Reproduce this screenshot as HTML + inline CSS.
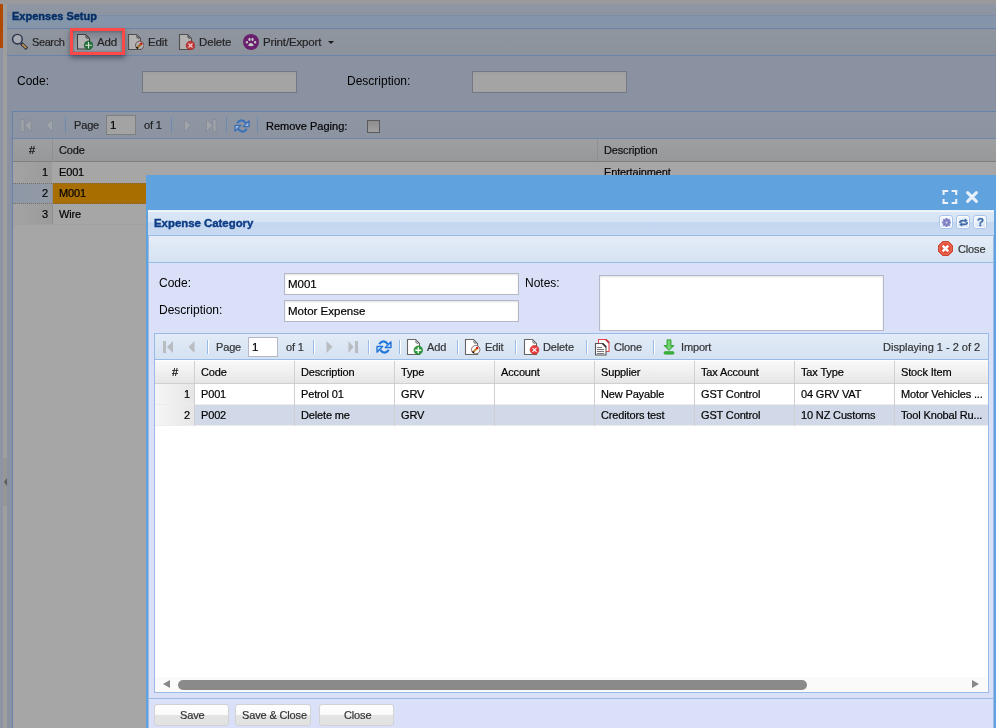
<!DOCTYPE html>
<html><head><meta charset="utf-8">
<style>
*{box-sizing:border-box;margin:0;padding:0}
html,body{width:996px;height:728px;overflow:hidden;background:#9a9a9a;font-family:"Liberation Sans",sans-serif;font-size:11px;color:#000}
.a{position:absolute}
.t{will-change:transform;-webkit-text-stroke:0.2px currentColor;position:absolute;white-space:nowrap;line-height:13px;letter-spacing:-0.15px}
.l12{will-change:transform;position:absolute;white-space:nowrap;line-height:14px;font-size:12px}
.sepm{position:absolute;width:1px;height:16px;background:#6f89b0}
.sepw{position:absolute;width:1px;height:16px;background:#99bbe8;border-right:1px solid #fff;width:2px}
.btn{border:1px solid #d2d2d2;border-radius:3px;background:linear-gradient(#fefefe 0,#fafafa 50%,#e4e4e4 50%,#e2e2e2 100%)}
.hc{position:absolute;top:0;height:22px;border-right:1px solid #d0d0d0}
</style></head><body>
<!-- ===== masked background app ===== -->
<div class="a" style="left:0;top:4px;width:3px;height:44px;background:#b04a02"></div>
<div class="a" style="left:0;top:48px;width:3px;height:680px;background:#8d95a5"></div>
<div class="a" style="left:3px;top:4px;width:4px;height:724px;background:#9e9e9e"></div>
<div class="a" style="left:3px;top:458px;width:4px;height:48px;background:#969696"></div>
<div class="a" style="left:4px;top:478px;width:0;height:0;border-top:4px solid transparent;border-bottom:4px solid transparent;border-right:3px solid #5d5d5d"></div>

<!-- panel header -->
<div class="a" style="left:7px;top:4px;width:989px;height:25px;background:linear-gradient(#8e97a3 0,#8b94a0 11px,#7b8da8 11px,#7b8da8 12px,#8495a9 12px,#8596aa 100%);border-bottom:1px solid #6b83a8"></div>
<div class="t" style="left:12px;top:10px;font-weight:bold;color:#052f66;font-size:11px;letter-spacing:0;-webkit-text-stroke:0.4px #052f66">Expenses Setup</div>
<!-- toolbar -->
<div class="a" style="left:7px;top:29px;width:989px;height:27px;background:linear-gradient(#90969f,#8c929c);border-bottom:1px solid #6c85ad"></div>

<!-- main toolbar items -->
<svg class="a" style="left:11px;top:33px" width="17" height="17" viewBox="0 0 17 17">
 <circle cx="6.4" cy="6.2" r="4.8" fill="#a7aab1" stroke="#27314c" stroke-width="1.4"/>
 <path d="M10.2,10.2 L16,15.8" stroke="#222a3a" stroke-width="3.4" stroke-linecap="butt"/>
 <path d="M11.2,11.1 L15.3,15.1" stroke="#b58d52" stroke-width="2"/>
</svg>
<div class="t" style="left:32px;top:36px;color:#242424;font-size:11px;letter-spacing:-0.4px">Search</div>
<div class="a" style="z-index:5;left:70px;top:28px;width:55px;height:27px;border:3px solid #ff4848;box-shadow:0 3px 5px rgba(30,32,40,0.5)"></div>
<div class="a" style="left:73px;top:31px;width:49px;height:21px;background:linear-gradient(#7a808a,#8e949d 40%,#9aa0a9);box-shadow:inset 0 0 3px rgba(50,55,65,0.6)"></div>
<svg class="a" style="left:76px;top:33px" width="17" height="17" viewBox="0 0 17 17">
 <path d="M1.5,1.5 H9.5 L13.5,5.5 V16 H1.5 Z" fill="#b3b3b3" stroke="#3d3d3d" stroke-width="1.1" stroke-linejoin="miter"/>
 <path d="M10.2,2.6 A1.5,1.5 0 0 0 12.4,4.8" fill="none" stroke="#3d3d3d" stroke-width="1"/>
 <circle cx="12.5" cy="12.3" r="4.3" fill="#24703a" stroke="#1a5a2a" stroke-width="0.6"/>
 <path d="M12.5,9 V15.6 M9.2,12.3 H15.8" stroke="#d4e4d4" stroke-width="1.1"/>
</svg>
<div class="t" style="left:97px;top:36px;color:#242424;font-size:11.5px">Add</div>
<svg class="a" style="left:127px;top:33px" width="17" height="17" viewBox="0 0 17 17">
 <path d="M1.5,1.5 H9.5 L13.5,5.5 V16.5 H1.5 Z" fill="#b3b3b3" stroke="#505050" stroke-width="1.1" stroke-linejoin="miter"/>
 <path d="M10.2,2.6 A1.5,1.5 0 0 0 12.4,4.8" fill="none" stroke="#3d3d3d" stroke-width="1"/>
 <circle cx="12.7" cy="12.3" r="4.2" fill="#b0aeb0" stroke="#5a3e3e" stroke-width="0.8"/>
 <path d="M10,15 L14.5,10.5" stroke="#9c6a1c" stroke-width="2"/>
 <path d="M13.5,11.5 L15,10" stroke="#d01010" stroke-width="2"/>
 <path d="M9.7,15.3 L10.6,14.4" stroke="#000" stroke-width="2"/>
</svg>
<div class="t" style="left:148px;top:36px;color:#242424;font-size:11.5px">Edit</div>
<svg class="a" style="left:178px;top:33px" width="17" height="17" viewBox="0 0 17 17">
 <path d="M1.5,1.5 H9.5 L13.5,5.5 V16.5 H1.5 Z" fill="#b3b3b3" stroke="#505050" stroke-width="1.1" stroke-linejoin="miter"/>
 <path d="M10.2,2.6 A1.5,1.5 0 0 0 12.4,4.8" fill="none" stroke="#3d3d3d" stroke-width="1"/>
 <circle cx="12.5" cy="12.5" r="4.4" fill="#c03737" stroke="#a02a2a" stroke-width="0.6"/>
 <path d="M10.5,10.5 L14.5,14.5 M14.5,10.5 L10.5,14.5" stroke="#f0d0d0" stroke-width="1.1"/>
</svg>
<div class="t" style="left:199px;top:36px;color:#242424;font-size:11.5px">Delete</div>
<svg class="a" style="left:243px;top:34px" width="16" height="16" viewBox="0 0 16 16">
 <circle cx="8" cy="8" r="8" fill="#6a1f6e"/>
 <g fill="#c6cdc4">
 <path d="M5.3,11.8 Q5.3,9.3 8,8.9 Q10.7,9.3 10.7,11.8 Q8,12.6 5.3,11.8 Z"/>
 <ellipse cx="3.9" cy="8.3" rx="1.1" ry="1.3"/>
 <ellipse cx="12.1" cy="8.3" rx="1.1" ry="1.3"/>
 <ellipse cx="6.5" cy="5.4" rx="1.1" ry="1.6"/>
 <ellipse cx="9.5" cy="5.4" rx="1.1" ry="1.6"/>
 </g>
</svg>
<div class="t" style="left:263px;top:36px;color:#242424;font-size:11.5px">Print/Export</div>
<div class="a" style="left:328px;top:41px;width:0;height:0;border-left:3px solid transparent;border-right:3px solid transparent;border-top:3px solid #1a1a1a"></div>
<!-- form -->
<div class="a" style="left:7px;top:56px;width:989px;height:672px;background:#8a92a2"></div>
<div class="l12" style="left:17px;top:74px;color:#000">Code:</div>
<div class="a" style="left:142px;top:71px;width:155px;height:22px;background:linear-gradient(#9ea0a0,#a4a4a4 4px);border:1px solid #747882"></div>
<div class="l12" style="left:347px;top:74px;color:#000">Description:</div>
<div class="a" style="left:472px;top:71px;width:155px;height:22px;background:linear-gradient(#9ea0a0,#a4a4a4 4px);border:1px solid #747882"></div>

<!-- grid (masked) -->
<div class="a" style="left:12px;top:111px;width:984px;height:617px;background:#a6a6a6;border:1px solid #6883aa;border-right:none;border-bottom:none"></div>
<!-- paging toolbar -->
<div class="a" style="left:13px;top:112px;width:983px;height:27px;background:linear-gradient(#8f96a3,#8c94a1);border-bottom:1px solid #6c85ad"></div>
<div class="t" style="left:74px;top:119px;color:#1f1f1f">Page</div>
<div class="a" style="left:106px;top:115px;width:30px;height:20px;background:#a3a3a3;border:1px solid #7f7f7f"></div>
<div class="t" style="left:110px;top:119px;color:#000;font-size:11.5px">1</div>
<div class="t" style="left:144px;top:119px;color:#1f1f1f">of 1</div>
<div class="sepm" style="left:65px;top:117px"></div>
<div class="sepm" style="left:171px;top:117px"></div>
<div class="sepm" style="left:226px;top:117px"></div>
<div class="sepm" style="left:257px;top:117px"></div>
<div class="t" style="left:266px;top:120px;color:#000;letter-spacing:0">Remove Paging:</div>
<div class="a" style="left:367px;top:120px;width:13px;height:13px;background:linear-gradient(#8d8d8d,#a0a0a0);border:1px solid #5a5a5a"></div>

<svg class="a" style="left:21px;top:119px" width="12" height="13" viewBox="0 0 12 13"><rect x="0" y="0.5" width="3" height="12" fill="#a0a4ab" stroke="#81868e" stroke-width="0.6"/><path d="M10,0.5 V12.5 L4,6.5 Z" fill="#a0a4ab" stroke="#81868e" stroke-width="0.6"/></svg>
<svg class="a" style="left:46px;top:119px" width="8" height="13" viewBox="0 0 8 13"><path d="M6.5,0.5 V12.5 L0.5,6.5 Z" fill="#a0a4ab" stroke="#81868e" stroke-width="0.6"/></svg>
<svg class="a" style="left:184px;top:119px" width="8" height="13" viewBox="0 0 8 13"><path d="M0.5,0.5 V12.5 L6.5,6.5 Z" fill="#a0a4ab" stroke="#81868e" stroke-width="0.6"/></svg>
<svg class="a" style="left:206px;top:119px" width="12" height="13" viewBox="0 0 12 13"><path d="M0.5,0.5 V12.5 L6.5,6.5 Z" fill="#a0a4ab" stroke="#81868e" stroke-width="0.6"/><rect x="7" y="0.5" width="3" height="12" fill="#a0a4ab" stroke="#81868e" stroke-width="0.6"/></svg>
<svg class="a" style="left:234px;top:118px" width="16" height="16" viewBox="0 0 16 16">
 <path d="M3.2,5.2 Q7.5,-0.6 11.8,5.2" stroke="#3a72bc" stroke-width="2.2" fill="none"/>
 <path d="M9.2,8.6 L15,8.6 L15,2.8 Z" fill="#9db8da" stroke="#3a6eb4" stroke-width="1.3" stroke-linejoin="round"/>
 <path d="M12.8,10.8 Q8.5,16.6 4.2,10.8" stroke="#3a72bc" stroke-width="2.2" fill="none"/>
 <path d="M6.8,7.4 L1,7.4 L1,13.2 Z" fill="#9db8da" stroke="#3a6eb4" stroke-width="1.3" stroke-linejoin="round"/>
</svg>
<!-- grid header -->
<div class="a" style="left:13px;top:139px;width:983px;height:23px;background:linear-gradient(#9e9fa0,#97989a);border-bottom:1px solid #808080"></div>
<div class="a" style="left:52px;top:139px;width:1px;height:86px;background:#8f8f8f"></div>
<div class="a" style="left:597px;top:139px;width:1px;height:22px;background:#8f8f8f"></div>
<div class="t" style="left:29px;top:144px;color:#111">#</div>
<div class="t" style="left:59px;top:144px;color:#111">Code</div>
<div class="t" style="left:604px;top:144px;color:#111">Description</div>
<!-- rows -->
<div class="a" style="left:13px;top:162px;width:983px;height:21px;background:#a6a6a6"></div>
<div class="a" style="left:13px;top:162px;width:39px;height:63px;background:linear-gradient(90deg,#a3a3a3,#9b9b9b)"></div>
<div class="a" style="left:13px;top:183px;width:39px;height:21px;background:linear-gradient(90deg,#8e97a6,#939aa6);border-top:1px dotted #7a7060;border-bottom:1px dotted #7a7060"></div>
<div class="a" style="left:53px;top:183px;width:943px;height:21px;background:#a86e00;border-top:1px dotted #7a6a4a;border-bottom:1px dotted #7a6a4a"></div>
<div class="a" style="left:13px;top:204px;width:983px;height:21px;background:transparent;border-bottom:1px solid #a0a0a0"></div>
<div class="t" style="left:42px;top:166px">1</div>
<div class="t" style="left:42px;top:187px">2</div>
<div class="t" style="left:42px;top:208px">3</div>
<div class="t" style="left:59px;top:166px">E001</div>
<div class="t" style="left:59px;top:187px">M001</div>
<div class="t" style="left:59px;top:208px">Wire</div>
<div class="t" style="left:604px;top:166px">Entertainment</div>

<!-- ===== modal window ===== -->
<div class="a" style="left:146px;top:175px;width:850px;height:553px;background:#5fa2dd"></div>
<!-- header tools -->
<svg class="a" style="left:942px;top:190px" width="16" height="14" viewBox="0 0 16 14" fill="#edf3fa">
 <rect x="0.6" y="0" width="5.6" height="2"/><rect x="0.6" y="0" width="2" height="5"/>
 <rect x="9.6" y="0" width="5.6" height="2"/><rect x="13.2" y="0" width="2" height="5"/>
 <rect x="0.6" y="12" width="5.6" height="2"/><rect x="0.6" y="9" width="2" height="5"/>
 <rect x="9.6" y="12" width="5.6" height="2"/><rect x="13.2" y="9" width="2" height="5"/>
</svg>
<svg class="a" style="left:965px;top:190px" width="14" height="14" viewBox="0 0 14 14">
 <path d="M2.6,2.6 L11.4,11.4 M11.4,2.6 L2.6,11.4" stroke="#e9f1fa" stroke-width="3" stroke-linecap="round"/>
</svg>
<!-- inner panel -->
<div class="a" style="left:148px;top:210px;width:846px;height:518px;background:#d9e0f8;border-left:1px solid #99bbe8;border-right:1px solid #99bbe8"></div>
<div class="a" style="left:148px;top:210px;width:846px;height:2px;background:linear-gradient(#e6eef9,#f4f8fd)"></div>
<div class="a" style="left:148px;top:212px;width:846px;height:24px;background:linear-gradient(#dbe7f6 0,#d5e3f4 10px,#c4d7f0 10px,#c8daf1 100%);border-bottom:1px solid #99bbe8"></div>
<div class="t" style="left:154px;top:217px;font-weight:bold;color:#0d3d86;letter-spacing:0;font-size:11.4px;-webkit-text-stroke:0.4px #0d3d86">Expense Category</div>
<!-- panel tools -->
<div class="a" style="left:939px;top:215px;width:14px;height:14px;border:1px solid #a9c4ea;border-radius:3px;background:#fff"></div>
<div class="a" style="left:956px;top:215px;width:14px;height:14px;border:1px solid #a9c4ea;border-radius:3px;background:#fff"></div>
<div class="a" style="left:973px;top:215px;width:14px;height:14px;border:1px solid #a9c4ea;border-radius:3px;background:#fff"></div>
<div class="a" style="left:941px;top:217px;width:10px;height:10px;background:linear-gradient(#eef4fc,#dce8f8)"></div>
<div class="a" style="left:958px;top:217px;width:10px;height:10px;background:linear-gradient(#eef4fc,#dce8f8)"></div>
<div class="a" style="left:975px;top:217px;width:10px;height:10px;background:linear-gradient(#eef4fc,#dce8f8)"></div>
<svg class="a" style="left:941px;top:217px" width="11" height="11" viewBox="0 0 11 11">
 <g fill="#8080c4">
 <circle cx="5.5" cy="5.5" r="3.4"/>
 <rect x="4.6" y="1" width="1.8" height="9"/>
 <rect x="1" y="4.6" width="9" height="1.8"/>
 <rect x="4.6" y="1" width="1.8" height="9" transform="rotate(45 5.5 5.5)"/>
 <rect x="4.6" y="1" width="1.8" height="9" transform="rotate(-45 5.5 5.5)"/>
 </g>
 <circle cx="5.5" cy="5.5" r="1.1" fill="#d8dcf0"/>
</svg>
<svg class="a" style="left:958px;top:217px" width="11" height="11" viewBox="0 0 11 11">
 <path d="M1.8,6 Q1.8,3.6 4.5,3.6 H7.5" stroke="#3f6aa6" stroke-width="1.6" fill="none"/>
 <path d="M6.8,1.2 L9.6,3.6 L6.8,6 Z" fill="#3f6aa6"/>
 <path d="M9.2,5 Q9.2,7.4 6.5,7.4 H3.5" stroke="#3f6aa6" stroke-width="1.6" fill="none"/>
 <path d="M4.2,5 L1.4,7.4 L4.2,9.8 Z" fill="#3f6aa6"/>
</svg>
<div class="t" style="left:977px;top:216px;font-weight:bold;color:#3d6aa6;font-size:11.5px;-webkit-text-stroke:0.3px #3d6aa6;letter-spacing:0;line-height:13px">?</div>
<!-- close toolbar -->
<div class="a" style="left:149px;top:236px;width:844px;height:27px;background:linear-gradient(#e4ecf7,#d6e3f2);border-bottom:1px solid #99bbe8"></div>
<svg class="a" style="left:938px;top:241px" width="15" height="15" viewBox="0 0 16 16">
 <path d="M5,0.5 H11 L15.5,5 V11 L11,15.5 H5 L0.5,11 V5 Z" fill="#e4472f" stroke="#c83a26" stroke-width="1"/>
 <path d="M5.6,2 H10.4 L14,5.6 V10.4 L10.4,14 H5.6 L2,10.4 V5.6 Z" fill="none" stroke="#f08a78" stroke-width="0.9"/>
 <path d="M5,5 L11,11 M11,5 L5,11" stroke="#fff" stroke-width="2.8"/>
</svg>
<div class="t" style="left:958px;top:243px;color:#333">Close</div>
<!-- form -->
<div class="l12" style="left:159px;top:276px;color:#000">Code:</div>
<div class="l12" style="left:159px;top:303px;color:#000">Description:</div>
<div class="a" style="left:284px;top:273px;width:235px;height:22px;background:#fff;border:1px solid #b5b8c8;box-shadow:inset 0 1px 2px rgba(0,0,0,0.12)"></div>
<div class="t" style="left:288px;top:278px;font-size:11.5px;letter-spacing:0">M001</div>
<div class="a" style="left:284px;top:300px;width:235px;height:22px;background:#fff;border:1px solid #b5b8c8;box-shadow:inset 0 1px 2px rgba(0,0,0,0.12)"></div>
<div class="t" style="left:288px;top:305px;font-size:11.5px;letter-spacing:0">Motor Expense</div>
<div class="l12" style="left:525px;top:276px;color:#000">Notes:</div>
<div class="a" style="left:599px;top:275px;width:285px;height:56px;background:#fff;border:1px solid #b5b8c8;box-shadow:inset 0 1px 2px rgba(0,0,0,0.12)"></div>

<!-- window grid -->
<div class="a" style="left:154px;top:333px;width:835px;height:360px;background:#fff;border:1px solid #99bbe8"></div>
<div class="a" style="left:155px;top:334px;width:833px;height:26px;background:linear-gradient(#e2ebf7,#d5e2f2);border-bottom:1px solid #99bbe8"></div>
<svg class="a" style="left:163px;top:341px" width="11" height="12" viewBox="0 0 11 12"><rect x="0" y="0" width="3" height="12" fill="#b9bcc0"/><path d="M10,0 V12 L4,6 Z" fill="#b9bcc0"/></svg>
<svg class="a" style="left:188px;top:341px" width="7" height="12" viewBox="0 0 7 12"><path d="M6.5,0 V12 L0.5,6 Z" fill="#b9bcc0"/></svg>
<div class="sepw" style="left:207px;top:340px;height:14px"></div>
<div class="t" style="left:216px;top:341px;color:#333">Page</div>
<div class="a" style="left:248px;top:337px;width:30px;height:20px;background:#fff;border:1px solid #b5b8c8"></div>
<div class="t" style="left:252px;top:341px;font-size:11.5px">1</div>
<div class="t" style="left:286px;top:341px;color:#333">of 1</div>
<div class="sepw" style="left:313px;top:340px;height:14px"></div>
<svg class="a" style="left:326px;top:341px" width="7" height="12" viewBox="0 0 7 12"><path d="M0.5,0 V12 L6.5,6 Z" fill="#b9bcc0"/></svg>
<svg class="a" style="left:348px;top:341px" width="11" height="12" viewBox="0 0 11 12"><path d="M0.5,0 V12 L5.5,6 Z" fill="#b9bcc0"/><rect x="7" y="0" width="3" height="12" fill="#b9bcc0"/></svg>
<div class="sepw" style="left:368px;top:340px;height:14px"></div>
<svg class="a" style="left:376px;top:339px" width="16" height="16" viewBox="0 0 16 16">
 <path d="M3.2,5.2 Q7.5,-0.6 11.8,5.2" stroke="#1f78dc" stroke-width="2.2" fill="none"/>
 <path d="M9.2,8.6 L15,8.6 L15,2.8 Z" fill="#a8d4ff" stroke="#1f6fd6" stroke-width="1.3" stroke-linejoin="round"/>
 <path d="M12.8,10.8 Q8.5,16.6 4.2,10.8" stroke="#1f78dc" stroke-width="2.2" fill="none"/>
 <path d="M6.8,7.4 L1,7.4 L1,13.2 Z" fill="#a8d4ff" stroke="#1f6fd6" stroke-width="1.3" stroke-linejoin="round"/>
</svg>
<div class="sepw" style="left:399px;top:340px;height:14px"></div>
<svg class="a" style="left:406px;top:338px" width="17" height="17" viewBox="0 0 17 17">
 <path d="M1.5,1.5 H9.5 L13.5,5.5 V16.5 H1.5 Z" fill="#fff" stroke="#666" stroke-width="1.1" stroke-linejoin="miter"/>
 <path d="M10.2,2.6 A1.5,1.5 0 0 0 12.4,4.8" fill="none" stroke="#666" stroke-width="1"/>
 <circle cx="12.3" cy="12.2" r="4.3" fill="#2a9a3a" stroke="#1f7a2c" stroke-width="0.6"/>
 <path d="M12.3,9.2 V15.2 M9.3,12.2 H15.3" stroke="#fff" stroke-width="1.4"/>
</svg>
<div class="t" style="left:427px;top:341px;color:#333">Add</div>
<div class="sepw" style="left:457px;top:340px;height:14px"></div>
<svg class="a" style="left:464px;top:338px" width="17" height="17" viewBox="0 0 17 17">
 <path d="M1.5,1.5 H9.5 L13.5,5.5 V16.5 H1.5 Z" fill="#fff" stroke="#666" stroke-width="1.1" stroke-linejoin="miter"/>
 <path d="M10.2,2.6 A1.5,1.5 0 0 0 12.4,4.8" fill="none" stroke="#666" stroke-width="1"/>
 <circle cx="11.7" cy="11.6" r="4.2" fill="#fff" stroke="#7a4a4a" stroke-width="0.8"/>
 <path d="M9,14.3 L13.5,9.8" stroke="#c08a30" stroke-width="2"/>
 <path d="M12.5,10.8 L14,9.3" stroke="#e01010" stroke-width="2"/>
 <path d="M8.7,14.6 L9.6,13.7" stroke="#000" stroke-width="2"/>
</svg>
<div class="t" style="left:485px;top:341px;color:#333">Edit</div>
<div class="sepw" style="left:515px;top:340px;height:14px"></div>
<svg class="a" style="left:523px;top:338px" width="17" height="17" viewBox="0 0 17 17">
 <path d="M1.5,1.5 H9.5 L13.5,5.5 V16.5 H1.5 Z" fill="#fff" stroke="#666" stroke-width="1.1" stroke-linejoin="miter"/>
 <path d="M10.2,2.6 A1.5,1.5 0 0 0 12.4,4.8" fill="none" stroke="#666" stroke-width="1"/>
 <circle cx="11.5" cy="11.8" r="4.4" fill="#e83a3a" stroke="#c02a2a" stroke-width="0.6"/>
 <path d="M9.5,9.8 L13.5,13.8 M13.5,9.8 L9.5,13.8" stroke="#fff" stroke-width="1.1"/>
</svg>
<div class="t" style="left:543px;top:341px;color:#333">Delete</div>
<div class="sepw" style="left:586px;top:340px;height:14px"></div>
<svg class="a" style="left:594px;top:338px" width="17" height="18" viewBox="0 0 17 18">
 <path d="M4.5,1.5 H12.5 L15,4 V13.5 H4.5 Z" fill="#fff" stroke="#e8484f" stroke-width="1.1"/>
 <path d="M11.5,1.5 L15,5" stroke="#b03040" stroke-width="1.3"/>
 <path d="M1.5,5.5 H9 L12,8.5 V17 H1.5 Z" fill="#fbfbfb" stroke="#555" stroke-width="1.1"/>
 <path d="M8.5,5.5 L12,9" stroke="#333" stroke-width="1.6"/>
 <path d="M3,9.5 H8 M3,11.5 H10 M3,13.5 H10 M3,15.5 H10" stroke="#777" stroke-width="1"/>
</svg>
<div class="t" style="left:614px;top:341px;color:#333">Clone</div>
<div class="sepw" style="left:653px;top:340px;height:14px"></div>
<svg class="a" style="left:663px;top:339px" width="12" height="16" viewBox="0 0 12 16">
 <defs><linearGradient id="gi" x1="0" x2="1" y1="0" y2="0"><stop offset="0" stop-color="#2fa82f"/><stop offset="0.5" stop-color="#7ad67a"/><stop offset="1" stop-color="#2fa82f"/></linearGradient></defs>
 <path d="M4,0.8 H8 V6.5 H11 L6,11.5 L1,6.5 H4 Z" fill="url(#gi)" stroke="#2a9a2a" stroke-width="0.8"/>
 <rect x="1" y="12.6" width="10" height="2.6" rx="1.2" fill="#3cb43c" stroke="#2a9a2a" stroke-width="0.6"/>
</svg>
<div class="t" style="left:681px;top:341px;color:#333">Import</div>
<div class="t" style="left:883px;top:341px;color:#333;letter-spacing:0">Displaying 1 - 2 of 2</div>
<!-- header -->
<div class="a" style="left:155px;top:361px;width:833px;height:23px;background:linear-gradient(#f9f9f9,#e6e6e6);border-bottom:1px solid #d0d0d0"></div>
<div class="t" style="left:172px;top:366px;color:#000">#</div>
<div class="t" style="left:201px;top:366px;color:#000">Code</div>
<div class="t" style="left:301px;top:366px;color:#000">Description</div>
<div class="t" style="left:401px;top:366px;color:#000">Type</div>
<div class="t" style="left:501px;top:366px;color:#000">Account</div>
<div class="t" style="left:601px;top:366px;color:#000">Supplier</div>
<div class="t" style="left:701px;top:366px;color:#000">Tax Account</div>
<div class="t" style="left:801px;top:366px;color:#000">Tax Type</div>
<div class="t" style="left:901px;top:366px;color:#000">Stock Item</div>
<div class="a" style="left:155px;top:384px;width:39px;height:42px;background:linear-gradient(90deg,#f6f6f6,#e6e6e6)"></div>
<div class="a" style="left:195px;top:405px;width:793px;height:20px;background:#d1d9e8"></div>
<div class="a" style="left:155px;top:404px;width:833px;height:1px;background:#ededed"></div>
<div class="a" style="left:155px;top:425px;width:833px;height:1px;background:#ededed"></div>
<div class="t" style="left:184px;top:388px">1</div>
<div class="t" style="left:201px;top:388px">P001</div>
<div class="t" style="left:301px;top:388px">Petrol 01</div>
<div class="t" style="left:401px;top:388px">GRV</div>
<div class="t" style="left:601px;top:388px">New Payable</div>
<div class="t" style="left:701px;top:388px">GST Control</div>
<div class="t" style="left:801px;top:388px">04 GRV VAT</div>
<div class="t" style="left:901px;top:388px">Motor Vehicles ...</div>
<div class="t" style="left:184px;top:409px">2</div>
<div class="t" style="left:201px;top:409px">P002</div>
<div class="t" style="left:301px;top:409px">Delete me</div>
<div class="t" style="left:401px;top:409px">GRV</div>
<div class="t" style="left:601px;top:409px">Creditors test</div>
<div class="t" style="left:701px;top:409px">GST Control</div>
<div class="t" style="left:801px;top:409px">10 NZ Customs</div>
<div class="t" style="left:901px;top:409px">Tool Knobal Ru...</div>

<div class="a" style="left:194px;top:361px;width:1px;height:65px;background:#d0d0d0"></div>
<div class="a" style="left:294px;top:361px;width:1px;height:65px;background:#d0d0d0"></div>
<div class="a" style="left:394px;top:361px;width:1px;height:65px;background:#d0d0d0"></div>
<div class="a" style="left:494px;top:361px;width:1px;height:65px;background:#d0d0d0"></div>
<div class="a" style="left:594px;top:361px;width:1px;height:65px;background:#d0d0d0"></div>
<div class="a" style="left:694px;top:361px;width:1px;height:65px;background:#d0d0d0"></div>
<div class="a" style="left:794px;top:361px;width:1px;height:65px;background:#d0d0d0"></div>
<div class="a" style="left:894px;top:361px;width:1px;height:65px;background:#d0d0d0"></div>
<!-- h scrollbar -->
<div class="a" style="left:155px;top:677px;width:833px;height:15px;background:#fafafa"></div>
<div class="a" style="left:163px;top:680px;width:0;height:0;border-top:4.5px solid transparent;border-bottom:4.5px solid transparent;border-right:7px solid #888"></div>
<div class="a" style="left:178px;top:680px;width:629px;height:10px;background:#8a8a8a;border-radius:5px"></div>
<div class="a" style="left:972px;top:680px;width:0;height:0;border-top:4.5px solid transparent;border-bottom:4.5px solid transparent;border-left:7px solid #888"></div>
<!-- footer -->
<div class="a" style="left:149px;top:698px;width:844px;height:1px;background:#99bbe8"></div>
<div class="a" style="left:149px;top:699px;width:844px;height:29px;background:#d9e0f8"></div>
<div class="a btn" style="left:154px;top:704px;width:75px;height:22px"></div>
<div class="a btn" style="left:235px;top:704px;width:76px;height:22px"></div>
<div class="a btn" style="left:319px;top:704px;width:75px;height:22px"></div>
<div class="t" style="left:180px;top:709px;color:#333">Save</div>
<div class="t" style="left:242px;top:709px;color:#333">Save &amp; Close</div>
<div class="t" style="left:344px;top:709px;color:#333">Close</div>
</body></html>
